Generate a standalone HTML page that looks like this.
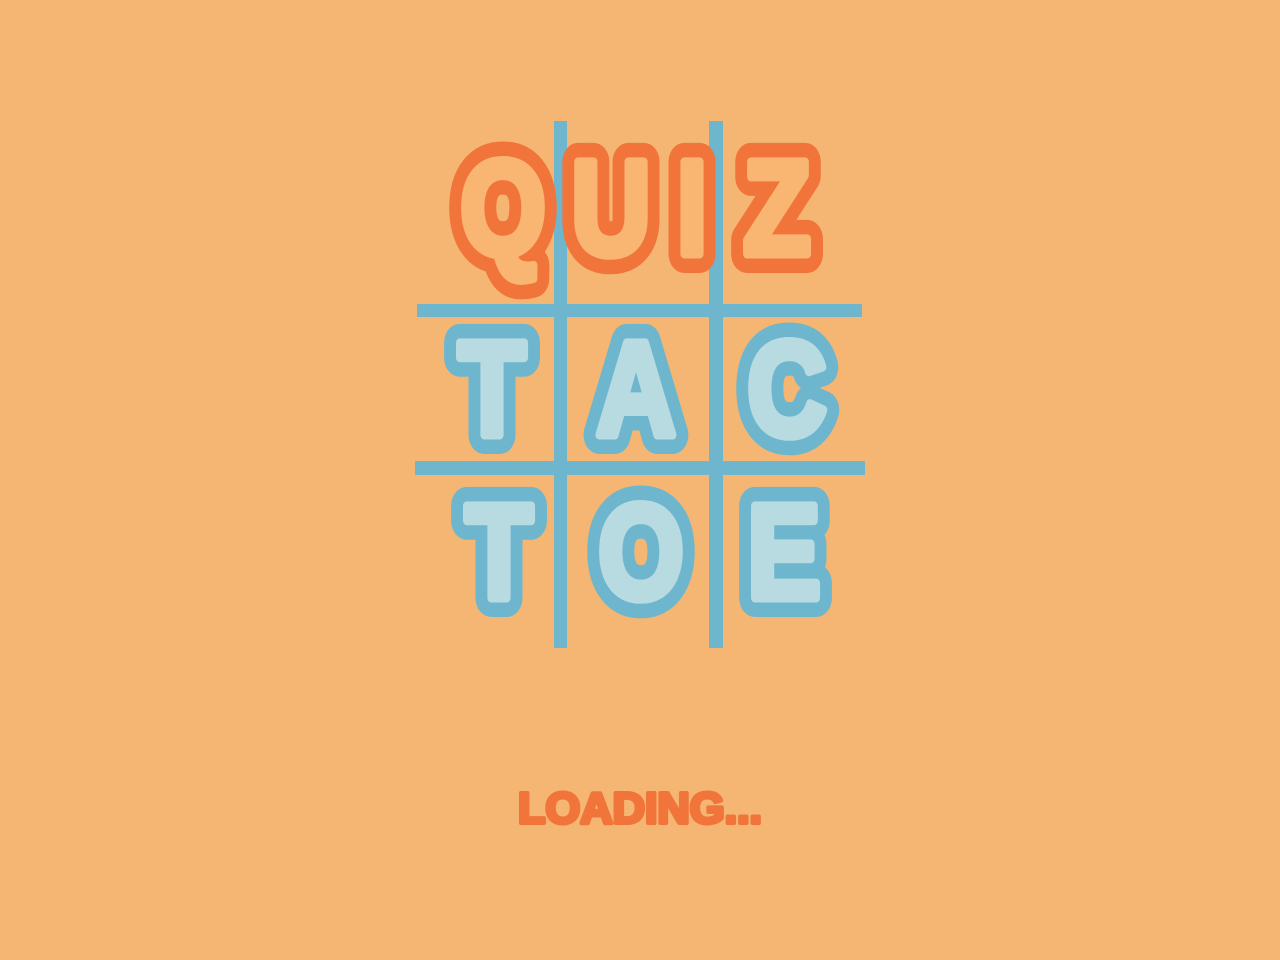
<!DOCTYPE html>
<html><head><style>
html,body{margin:0;padding:0;background:#F5B673;width:1280px;height:960px;overflow:hidden}
svg{display:block}
text{font-family:"Liberation Sans",sans-serif;font-weight:bold;stroke-linejoin:round;text-anchor:middle}
.o1{fill:#F1743A;stroke:#F1743A;stroke-width:38px}
.o2{fill:#F9B572;stroke:#F9B572;stroke-width:9px}
.b1{fill:#6DB6CE;stroke:#6DB6CE;stroke-width:38px}
.b2{fill:#B8DAE1;stroke:#B8DAE1;stroke-width:9px}
</style></head><body>
<svg width="1280" height="960" viewBox="0 0 1280 960">
<rect x="554" y="121" width="13" height="527" fill="#6DB6CE"/>
<rect x="709" y="121" width="14" height="527" fill="#6DB6CE"/>
<rect x="417" y="304" width="445" height="13" fill="#6DB6CE"/>
<rect x="415" y="461" width="450" height="14" fill="#6DB6CE"/>
<defs>
<g id="q"><text transform="translate(503,254) scale(0.82,1)">Q</text><text transform="translate(611,254) scale(0.82,1)">U</text><text transform="translate(692,254) scale(0.82,1)">I</text><text transform="translate(777,254) scale(0.82,1)">Z</text></g>
<g id="t"><text transform="translate(492,435) scale(0.82,1)">T</text><text transform="translate(636,435) scale(0.82,1)">A</text><text transform="translate(787,435) scale(0.82,1)">C</text><text transform="translate(499,598) scale(0.82,1)">T</text><text transform="translate(641,598) scale(0.82,1)">O</text><text transform="translate(784,598) scale(0.82,1)">E</text></g>
</defs>
<g font-size="134">
<g class="o1"><text transform="translate(503,254) scale(0.82,1)">Q</text><text transform="translate(611,254) scale(0.82,1)">U</text><text transform="translate(692,254) scale(0.82,1)">I</text><text transform="translate(777,254) scale(0.82,1)">Z</text></g>
<g class="o2"><text transform="translate(503,254) scale(0.82,1)">Q</text><text transform="translate(611,254) scale(0.82,1)">U</text><text transform="translate(692,254) scale(0.82,1)">I</text><text transform="translate(777,254) scale(0.82,1)">Z</text></g>
<g class="b1"><text transform="translate(492,435) scale(0.82,1)">T</text><text transform="translate(636,435) scale(0.82,1)">A</text><text transform="translate(787,435) scale(0.82,1)">C</text><text transform="translate(499,598) scale(0.82,1)">T</text><text transform="translate(641,598) scale(0.82,1)">O</text><text transform="translate(784,598) scale(0.82,1)">E</text></g>
<g class="b2"><text transform="translate(492,435) scale(0.82,1)">T</text><text transform="translate(636,435) scale(0.82,1)">A</text><text transform="translate(787,435) scale(0.82,1)">C</text><text transform="translate(499,598) scale(0.82,1)">T</text><text transform="translate(641,598) scale(0.82,1)">O</text><text transform="translate(784,598) scale(0.82,1)">E</text></g>
</g>
<text x="640" y="823" font-size="44" fill="#F1743A" stroke="#F1743A" stroke-width="4" textLength="244" lengthAdjust="spacingAndGlyphs">LOADING...</text>
</svg>
</body></html>
